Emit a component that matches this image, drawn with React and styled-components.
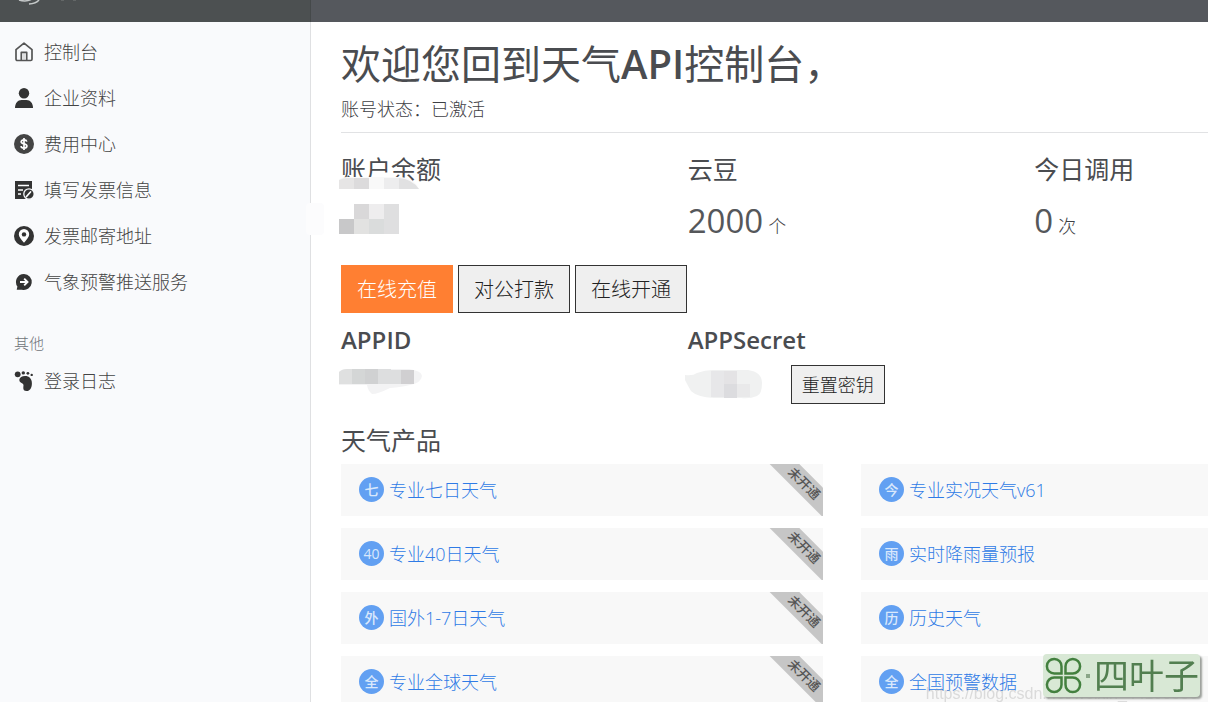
import React from "react";
import styled, { createGlobalStyle, css } from "styled-components";

const GlobalStyle = createGlobalStyle`
  *, *::before, *::after { box-sizing: border-box; }
  body {
    margin: 0;
    background: #fff;
    color: #3e4044;
    font-family: "Open Sans", "Noto Sans CJK SC", sans-serif;
    font-size: 18px;
    font-weight: 300;
  }
  h1, h2, h3, p, ul { margin: 0; padding: 0; }
  ul { list-style: none; }
`;

const Shell = styled.div`
  display: flex;
  flex-direction: column;
  height: 100vh;
  overflow: hidden;
`;

const TopBar = styled.header`
  display: flex;
  flex: none;
  height: 22px;
  background: #55585d;
`;

const Brand = styled.div`
  width: 311px;
  padding-left: 16px;
  background: #4c5051;
  border-right: 1px solid #45494a;

  svg { display: block; }
`;

const Body = styled.div`
  display: flex;
  flex: 1;
  min-height: 0;
`;

const Sidebar = styled.aside`
  position: relative;
  flex: none;
  width: 311px;
  padding-top: 7px;
  background: #f9fafc;
  border-right: 1px solid #dfe0e2;
`;

const Smudge = styled.span`
  position: absolute;
  top: 181px;
  right: -14px;
  width: 18px;
  height: 32px;
  border-radius: 4px;
  background: #fcfcfd;
`;

const NavLink = styled.a`
  display: flex;
  align-items: center;
  gap: 10px;
  height: 46px;
  padding-left: 14px;
  color: #444;
  text-decoration: none;

  svg { flex: none; color: #333; }
`;

const Label = styled.span`
  padding-bottom: 3px;
`;

const NavHeading = styled.h2`
  margin: 28px 0 5px;
  padding-left: 14px;
  color: #6f7378;
  font-size: 15px;
  font-weight: 300;
  line-height: 20px;
`;

const Main = styled.main`
  flex: 1;
  min-width: 0;
  padding: 18px 0 0 30px;
  overflow: hidden;
`;

const Content = styled.div`
  min-width: 1040px;
`;

const PageHead = styled.div`
  padding-bottom: 9px;
  border-bottom: 1px solid #e1e2e4;
`;

const Title = styled.h1`
  color: #4a4c50;
  font-size: 40px;
  font-weight: 400;
  line-height: 48px;
`;

const Latin = styled.span`
  font-weight: 600;
`;

const Status = styled.p`
  margin-top: 7px;
  line-height: 28px;
`;

const Columns = styled.section`
  display: grid;
  grid-template-columns: repeat(3, 1fr);
  margin-top: ${(p) => p.$top}px;
`;

const Stat = styled.div`
  position: relative;
`;

const Heading = styled.h3`
  color: #4a4c50;
  font-size: 25px;
  font-weight: 400;
  line-height: 30px;

  ${(p) => p.$strong && css`
    font-size: 24px;
    font-weight: 600;
  `}
`;

const Figure = styled.p`
  display: flex;
  align-items: baseline;
  gap: 5px;
  margin-top: 13px;
  height: 48px;
  line-height: 48px;
`;

const Number = styled.span`
  color: #55575a;
  font-size: 33px;
  font-weight: 400;
`;

const Actions = styled.div`
  display: flex;
  gap: 5px;
  margin-top: 20px;
`;

const Button = styled.button`
  border: 1px solid #333;
  border-radius: 0;
  background: #efefef;
  color: #222;
  font-family: inherit;
  font-size: 20px;
  font-weight: 300;
  height: 48px;
  padding: 0 15px 2px;
  cursor: pointer;

  ${(p) => p.$primary && css`
    border-color: #ff7f32;
    background: #ff7f32;
    color: #fff;
  `}
  ${(p) => p.$small && css`
    height: 39px;
    padding: 0 10px 2px;
    font-size: 18px;
  `}
`;

const SecretRow = styled.div`
  display: flex;
  align-items: center;
  gap: 27px;
  height: 39px;
  margin-top: 10px;
`;

const Mask = styled.svg`
  display: block;
  flex: none;
  margin-left: -4px;
`;

const BalanceMask = styled(Mask)`
  position: absolute;
  top: 23px;
  left: 0;
  margin-left: -2px;
`;

const SectionTitle = styled(Heading)`
  margin-top: 21px;
`;

const Products = styled.ul`
  display: grid;
  grid-template-columns: repeat(2, 1fr);
  gap: 12px 38px;
  margin-top: 9px;
  margin-right: 38px;
`;

const Card = styled.li`
  position: relative;
  display: flex;
  align-items: center;
  height: 52px;
  padding-left: 18px;
  overflow: hidden;
  background: #f8f8f8;
`;

const ProductLink = styled.a`
  display: flex;
  align-items: center;
  gap: 5px;
  color: #2f7be6;
  text-decoration: none;
`;

const Badge = styled.span`
  display: flex;
  align-items: center;
  justify-content: center;
  width: 25px;
  height: 25px;
  margin-bottom: 2px;
  border-radius: 50%;
  background: #62a0f2;
  color: #d9e8fc;
  font-size: 14px;
  font-weight: 500;
  line-height: 25px;
`;

const Ribbon = styled.span`
  position: absolute;
  top: 9px;
  right: -26px;
  width: 90px;
  height: 21px;
  background: #c6c6c6;
  color: #555;
  font-size: 13px;
  font-weight: 500;
  line-height: 21px;
  text-align: center;
  transform: rotate(45deg);
`;

const SourceMark = styled.span`
  position: fixed;
  right: 10px;
  bottom: -2px;
  color: rgba(150, 150, 150, 0.3);
  font-family: "Liberation Sans", sans-serif;
  font-size: 16px;
  line-height: 20px;
`;

const Stamp = styled.div`
  position: fixed;
  right: 8px;
  bottom: 5px;
  display: flex;
  align-items: center;
  width: 157px;
  height: 43px;
  padding-left: 2px;
  border-radius: 4px;
  background: #d8e8d5;
  box-shadow: 2px 2px 2px #9b9f9a;
  color: #527f50;
  font-size: 35px;
  font-weight: 400;
  line-height: 43px;
  white-space: nowrap;
`;

const Dot = styled.i`
  width: 4px;
  height: 4px;
  margin: 0 4px;
  background: #8aa588;
`;

const Icon = ({ children }) => (
  <svg width="20" height="20" viewBox="0 0 20 20" fill="currentColor" aria-hidden="true">
    {children}
  </svg>
);

const HomeIcon = () => (
  <Icon>
    <path d="M2 7.6 10 1.2l8 6.4v9.6a1.3 1.3 0 0 1-1.3 1.3H3.3A1.3 1.3 0 0 1 2 17.2z M7.3 18.500V10.300h5.400v8.200" fill="none" stroke="#555" strokeWidth="1.700" strokeLinejoin="round" />
    <path d="M10 11v7" stroke="#aaa" strokeWidth="0.700" />
  </Icon>
);

const UserIcon = () => (
  <Icon>
    <circle cx="10" cy="5.200" r="5.200" />
    <path d="M1 20c0-5 2.800-8 6.500-8h5c3.700 0 6.500 3 6.500 8z" />
  </Icon>
);

const MoneyIcon = () => (
  <Icon>
    <circle cx="10" cy="10" r="10" fill="#444" />
    <path d="M12.800 7.600c-.3-1.200-1.400-1.800-2.800-1.800-1.700 0-2.800.8-2.800 2s1 1.700 2.800 2.100 2.900 1 2.900 2.200-1.200 2-2.900 2-2.800-.7-3-1.900M10 4v12" fill="none" stroke="#fff" strokeWidth="1.700" />
  </Icon>
);

const InvoiceIcon = () => (
  <Icon>
    <path d="M1 1h17v18H1z" />
    <path d="M4 5.500h11M4 10h5M4 14h3" stroke="#fff" strokeWidth="1.600" />
    <circle cx="15" cy="14" r="5.200" stroke="#f9fafc" strokeWidth="1.300" />
    <path d="m12.500 16.500 4-4.500" stroke="#fff" strokeWidth="1.700" strokeLinecap="round" />
  </Icon>
);

const PinIcon = () => (
  <Icon>
    <circle cx="10" cy="10" r="10" />
    <path d="M10 16.800C7.300 13.700 4.800 11 4.800 8.300a5.200 5.200 0 0 1 10.400 0c0 2.700-2.500 5.400-5.200 8.500z" fill="#fff" />
    <circle cx="10" cy="8.400" r="2.200" />
  </Icon>
);

const PushIcon = () => (
  <Icon>
    <path d="M10 2a8 8 0 1 1-2 15.800H2.700l.7-3.200A8 8 0 0 1 10 2z" />
    <path d="M6 10h7M10.200 6.700 13.500 10l-3.300 3.300" fill="none" stroke="#fff" strokeWidth="1.900" />
  </Icon>
);

const FootIcon = () => (
  <Icon>
    <circle cx="3.700" cy="3.300" r="2.900" />
    <circle cx="9.300" cy="1.900" r="1.700" />
    <circle cx="13.900" cy="2.300" r="1.400" />
    <circle cx="17.700" cy="3.900" r="1.200" />
    <path d="M5.300 8.800C5.500 6.400 8 5 11 5c4.200 0 6.900 2.700 6.900 7.200 0 4.900-2 7.800-5.300 7.800-2.400 0-3.500-1.300-3.300-3.600.1-1.700.6-3-.5-3.700-1.500-.9-3.700-1.600-3.500-3.900z" />
  </Icon>
);

const Clover = () => (
  <svg width="37" height="37" viewBox="0 0 37 37" fill="none" stroke="#43803f" strokeWidth="2.500" aria-hidden="true">
    {[0, 90, 180, 270].map((angle) => (
      <path
        key={angle}
        transform={`rotate(${angle} 18.500 18.500)`}
        d="M16.500 16.500V9.500A7.300 7.300 0 1 0 9.300 16.500z"
      />
    ))}
  </svg>
);

const navItems = [
  ["控制台", HomeIcon],
  ["企业资料", UserIcon],
  ["费用中心", MoneyIcon],
  ["填写发票信息", InvoiceIcon],
  ["发票邮寄地址", PinIcon],
  ["气象预警推送服务", PushIcon],
];

const products = [
  ["七", "专业七日天气"],
  ["今", "专业实况天气v61"],
  ["40", "专业40日天气"],
  ["雨", "实时降雨量预报"],
  ["外", "国外1-7日天气"],
  ["历", "历史天气"],
  ["全", "专业全球天气"],
  ["全", "全国预警数据"],
];

const NavItem = ({ label, Glyph }) => (
  <li>
    <NavLink href="#">
      <Glyph />
      <Label>{label}</Label>
    </NavLink>
  </li>
);

export default function App() {
  return (
    <Shell>
      <GlobalStyle />
      <TopBar>
        <Brand>
          <svg width="60" height="6" viewBox="0 0 60 6" fill="none" aria-hidden="true">
            <path d="M3 0q7 2 12-.5M13 4q7-.5 10-4" stroke="#c5c9c9" strokeWidth="1.500" />
            <path d="M45 0h3M57 0h3" stroke="#7b7f7f" />
          </svg>
        </Brand>
      </TopBar>
      <Body>
        <Sidebar>
          <nav>
            <ul>
              {navItems.map(([label, Glyph]) => (
                <NavItem key={label} label={label} Glyph={Glyph} />
              ))}
            </ul>
            <NavHeading>其他</NavHeading>
            <ul>
              <NavItem label="登录日志" Glyph={FootIcon} />
            </ul>
          </nav>
          <Smudge />
        </Sidebar>
        <Main>
          <Content>
            <PageHead>
              <Title>欢迎您回到天气<Latin>API</Latin>控制台，</Title>
              <Status>账号状态：已激活</Status>
            </PageHead>

            <Columns $top={21}>
              <Stat>
                <Heading>账户余额</Heading>
                <BalanceMask width="84" height="58" viewBox="0 0 84 58" aria-hidden="true">
                  <path d="M0 3q2-3 8-3h52q14 0 20 12H0z" fill="#f9f9f9" />
                  <path d="M0 3q4-2 9-2h6v11H0z" fill="#e6e5e5" />
                  <path d="M15 1h15v11H15z" fill="#dcdbdc" />
                  <path d="M45 1h15v11H45z" fill="#ededee" />
                  <path d="M60 1q13 1 20 11H60z" fill="#e1e1e2" />
                  <path d="M15 27h15v15H15z" fill="#d9d8d9" />
                  <path d="M30 27h15v15H30z" fill="#eeedee" />
                  <path d="M45 27h15v30H45z" fill="#dfdfe0" />
                  <path d="M0 42h15v15H0z" fill="#c8c8c9" />
                  <path d="M15 42h15v15H15z" fill="#e2e2e1" />
                  <path d="M30 42h15v15H30z" fill="#dadcdc" />
                </BalanceMask>
              </Stat>
              <Stat>
                <Heading>云豆</Heading>
                <Figure><Number>2000</Number>个</Figure>
              </Stat>
              <Stat>
                <Heading>今日调用</Heading>
                <Figure><Number>0</Number>次</Figure>
              </Stat>
            </Columns>

            <Actions>
              <Button type="button" $primary>在线充值</Button>
              <Button type="button">对公打款</Button>
              <Button type="button">在线开通</Button>
            </Actions>

            <Columns $top={12}>
              <Stat>
                <Heading $strong>APPID</Heading>
                <SecretRow>
                  <Mask width="88" height="38" viewBox="0 0 88 38" aria-hidden="true">
                    <path d="M2 6q3-3 8-3h62q13 2 13 7-1 7-12 9-8 2-20 3-12 6-18 6-4-3-5-9H2z" fill="#f3f3f4" />
                    <path d="M2 6q3-3 8-3h5v15H2z" fill="#dfe0e0" />
                    <path d="M15 3h13v15H15z" fill="#d4d6d6" />
                    <path d="M28 3h13v15H28z" fill="#d0d1d2" />
                    <path d="M41 3h13v15H41z" fill="#dddedf" />
                    <path d="M54 4h13v14H54z" fill="#dddedf" />
                    <path d="M64 4h13v14H64z" fill="#d0cfd1" />
                  </Mask>
                </SecretRow>
              </Stat>
              <Stat>
                <Heading $strong>APPSecret</Heading>
                <SecretRow>
                  <Mask width="80" height="30" viewBox="0 0 80 30" aria-hidden="true">
                    <path d="M1 5q8 1 12-2 8-3 16-3h35q14 2 14 13 0 11-5 13-7 3-16 2H30q-17-1-23-7-3-5-6-11z" fill="#f0f1f1" />
                    <path d="M27 1h26v26H27z" fill="#e7e7e9" />
                    <path d="M40 1h13v13H40z" fill="#e4e3e5" />
                    <path d="M40 14h13v14H40z" fill="#dcdcdf" />
                    <path d="M53 14h13v13H53z" fill="#e9e9ea" />
                  </Mask>
                  <Button type="button" $small>重置密钥</Button>
                </SecretRow>
              </Stat>
            </Columns>

            <SectionTitle>天气产品</SectionTitle>
            <Products>
              {products.map(([mark, name]) => (
                <Card key={name}>
                  <ProductLink href="#">
                    <Badge>{mark}</Badge>
                    <Label>{name}</Label>
                  </ProductLink>
                  <Ribbon>未开通</Ribbon>
                </Card>
              ))}
            </Products>
          </Content>
        </Main>
      </Body>
      <SourceMark>https://blog.csdn.net/weixin_44108336</SourceMark>
      <Stamp>
        <Clover />
        <Dot />
        四叶子
      </Stamp>
    </Shell>
  );
}
